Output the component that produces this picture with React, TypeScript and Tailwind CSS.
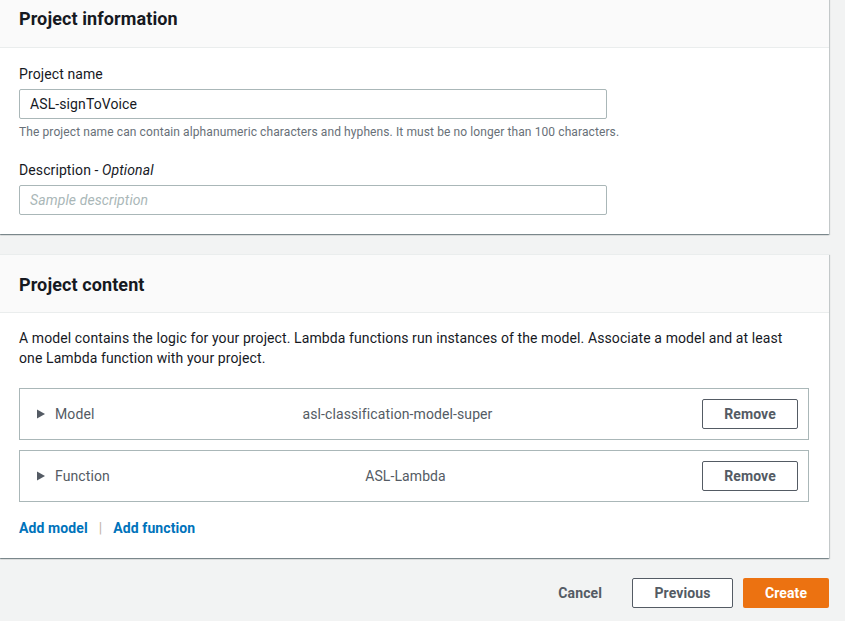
import React from "react";

const cardShadow =
  "shadow-[0_1px_1px_0_rgba(0,28,36,0.3),1px_1px_1px_0_rgba(0,28,36,0.15),-1px_1px_1px_0_rgba(0,28,36,0.15)]";

function Caret() {
  return (
    <svg width="8" height="10" viewBox="0 0 8 10" className="shrink-0">
      <polygon points="0,0.5 8,5 0,9.5" fill="#545b64" />
    </svg>
  );
}

function ResourceRow({ label, value, shift }: { label: string; value: string; shift: string }) {
  return (
    <div className="flex h-[52px] items-center border border-[#aab7b8] pl-[17px] pr-[10px]">
      <Caret />
      <span className="ml-[10px] w-[80px] text-[14px] text-[#545b64]">{label}</span>
      <span className={`flex-1 text-center text-[14px] text-[#545b64] ${shift}`}>{value}</span>
      <button className="h-[30px] w-[96px] rounded-[2px] border border-[#545b64] bg-white text-[14px] font-bold text-[#545b64]">
        Remove
      </button>
    </div>
  );
}

export default function App() {
  return (
    <div
      className="min-h-[621px] w-[845px] overflow-hidden bg-[#f2f3f3] pr-[16px] tracking-[0.1px] text-[#16191f]"
      style={{ fontFamily: "Roboto, 'Liberation Sans', Arial, sans-serif" }}
    >
      <div className="-mt-[10px]">
        {/* Project information */}
        <div className={`bg-white ${cardShadow}`}>
          <div className="flex h-[58px] items-center border-b border-[#eaeded] bg-[#fafafa] pl-[19px]">
            <h2 className="text-[18px] font-bold leading-[22px]">Project information</h2>
          </div>
          <div className="px-[19px] pb-[19px] pt-[16px]">
            <div className="text-[14px] leading-[20px]">Project name</div>
            <div className="mt-[5px] flex h-[30px] w-[588px] items-center rounded-[2px] border border-[#aab7b8] px-[10px] text-[14px]">
              ASL-signToVoice
            </div>
            <div className="mt-[5px] text-[12px] leading-[16px] text-[#687078]">
              The project name can contain alphanumeric characters and hyphens. It must be no longer than 100 characters.
            </div>
            <div className="mt-[20px] text-[14px] leading-[20px]">
              Description - <i>Optional</i>
            </div>
            <div className="mt-[5px] flex h-[30px] w-[588px] items-center rounded-[2px] border border-[#aab7b8] px-[10px] text-[14px] italic text-[#aab7b8]">
              Sample description
            </div>
          </div>
        </div>

        {/* Project content */}
        <div className={`mt-[20px] border-t border-[#eaeded] bg-white ${cardShadow}`}>
          <div className="flex h-[58px] items-center border-b border-[#eaeded] bg-[#fafafa] pl-[19px] pt-[2px]">
            <h2 className="text-[18px] font-bold leading-[22px]">Project content</h2>
          </div>
          <div className="px-[19px] pb-[20px] pt-[15px]">
            <p className="pr-[20px] text-[14px] leading-[20px]">
              A model contains the logic for your project. Lambda functions run instances of the model. Associate a
              model and at least one Lambda function with your project.
            </p>
            <div className="mt-[20px] flex flex-col gap-[10px] pr-[1px]">
              <ResourceRow label="Model" value="asl-classification-model-super" shift="pr-[42px]" />
              <ResourceRow label="Function" value="ASL-Lambda" shift="pr-[26px]" />
            </div>
            <div className="mt-[16px] flex items-center text-[14px] font-bold leading-[20px]">
              <span className="text-[#0073bb]">Add model</span>
              <span className="mx-[11px] font-normal text-[#c4b5a6]">|</span>
              <span className="text-[#0073bb]">Add function</span>
            </div>
          </div>
        </div>

        {/* Footer actions */}
        <div className="mt-[20px] flex items-center justify-end gap-[10px]">
          <button className="h-[30px] px-[20px] text-[14px] font-bold text-[#545b64]">Cancel</button>
          <button className="h-[30px] w-[101px] rounded-[2px] border border-[#545b64] bg-white text-[14px] font-bold text-[#545b64]">
            Previous
          </button>
          <button className="h-[30px] w-[86px] rounded-[2px] bg-[#ec7211] text-[14px] font-bold text-white">
            Create
          </button>
        </div>
      </div>
    </div>
  );
}
